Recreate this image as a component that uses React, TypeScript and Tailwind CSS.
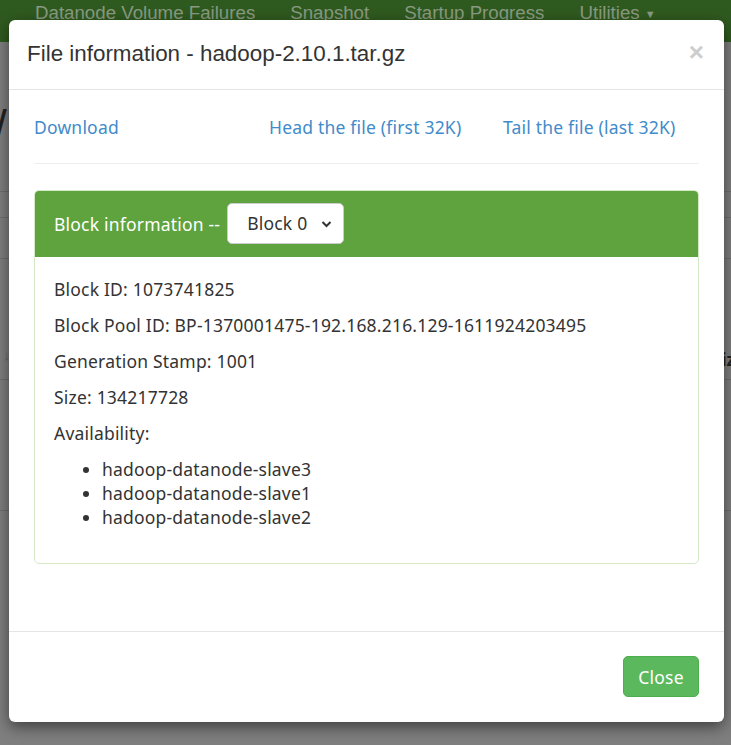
const body = "font-['Noto_Sans',sans-serif] text-[17.5px] tracking-[0.2px]";

function PageBehind() {
  return (
    <div className="flex flex-col">
      <div className="h-[43px] bg-[#2f5a1f] flex items-start pl-[35px] gap-[35px] font-['Liberation_Sans',Arial,sans-serif] text-[18.7px] text-[#8a9a82] leading-[28px] -mt-[1px] whitespace-nowrap">
        <span>Datanode Volume Failures</span>
        <span>Snapshot</span>
        <span>Startup Progress</span>
        <span>Utilities <span className="text-[11px] align-middle">▼</span></span>
      </div>
      <div className="h-[110px] relative">
        <span className="absolute left-[-6px] top-[62px] text-[46px] leading-none text-[#222] font-['Liberation_Sans',sans-serif]">/</span>
      </div>
      <div className="h-[40px] border-b border-[#6f6f6f]" />
      <div className="h-[26px] border-b border-[#6f6f6f]" />
      <div className="h-[41px] border-b border-[#6f6f6f]" />
      <div className="h-[121px] border-b border-[#6f6f6f] relative">
        <span className="absolute right-[-4px] top-[88px] text-[17px] font-bold text-[#222] font-['Noto_Sans',sans-serif]">iz</span>
        <span className="absolute left-[3px] top-[84px] text-[15px] text-[#6a6a6a]">↓</span>
      </div>
      <div className="h-[131px] border-b border-[#6f6f6f]" />
    </div>
  );
}

function Modal() {
  return (
    <div className="absolute left-[9px] top-[20px] w-[715px] h-[702px] bg-white rounded-[6px] shadow-[0_5px_15px_rgba(0,0,0,0.5)] flex flex-col">
      <div className="flex items-start justify-between pl-[18px] pr-[20px] pt-[18px] pb-[20px] border-b border-[#e5e5e5]">
        <h4 className="font-['Liberation_Sans',Arial,sans-serif] text-[22.4px] leading-[31px] text-[#333]">
          File information - hadoop-2.10.1.tar.gz
        </h4>
        <span className="font-['Liberation_Sans',Arial,sans-serif] font-bold text-[26px] leading-[26px] text-[#cdcdcd] mt-[1px]">×</span>
      </div>

      <div className={`flex-1 px-[25px] pt-[25px] ${body} text-[#333]`}>
        <div className="flex leading-[24px] text-[#428bca]">
          <a className="w-[235px]">Download</a>
          <a className="w-[234px]">Head the file (first 32K)</a>
          <a>Tail the file (last 32K)</a>
        </div>
        <hr className="mt-[24px] mb-[26px] border-t border-[#eee]" />

        <div className="border border-[#d6e9c6] rounded-[5px] overflow-hidden">
          <div className="bg-[#5fa33e] text-white px-[19px] pt-[12px] pb-[13px] flex items-center">
            <span className="leading-[24px]">Block information --</span>
            <div className="ml-[7px] w-[117px] h-[41px] bg-white rounded-[5px] border border-[#ccc] flex items-center pl-[19px] pr-[11px] text-[#333] justify-between">
              <span>Block 0</span>
              <svg width="11" height="8" viewBox="0 0 11 8" className="mt-[1px]">
                <path d="M1.5 2 L5.5 6 L9.5 2" stroke="#333" strokeWidth="2" fill="none" />
              </svg>
            </div>
          </div>
          <div className="px-[19px] pt-[20px] pb-[22px] leading-[24px]">
            <p className="mb-[12px]">Block ID: 1073741825</p>
            <p className="mb-[12px]">Block Pool ID: BP-1370001475-192.168.216.129-1611924203495</p>
            <p className="mb-[12px]">Generation Stamp: 1001</p>
            <p className="mb-[12px]">Size: 134217728</p>
            <p className="mb-[12px]">Availability:</p>
            <ul className="list-disc pl-[48px] mb-[12px]">
              <li>hadoop-datanode-slave3</li>
              <li>hadoop-datanode-slave1</li>
              <li>hadoop-datanode-slave2</li>
            </ul>
          </div>
        </div>
      </div>

      <div className="border-t border-[#e5e5e5] flex justify-end pr-[25px] pt-[24px] pb-[25px]">
        <button className={`${body} leading-[24px] text-white bg-[#5cb85c] border border-[#4cae4c] rounded-[5px] w-[76px] h-[41px]`}>
          Close
        </button>
      </div>
    </div>
  );
}

export default function App() {
  return (
    <div className="relative w-[731px] h-[745px] overflow-hidden bg-[#7f7f7f]">
      <PageBehind />
      <Modal />
    </div>
  );
}
